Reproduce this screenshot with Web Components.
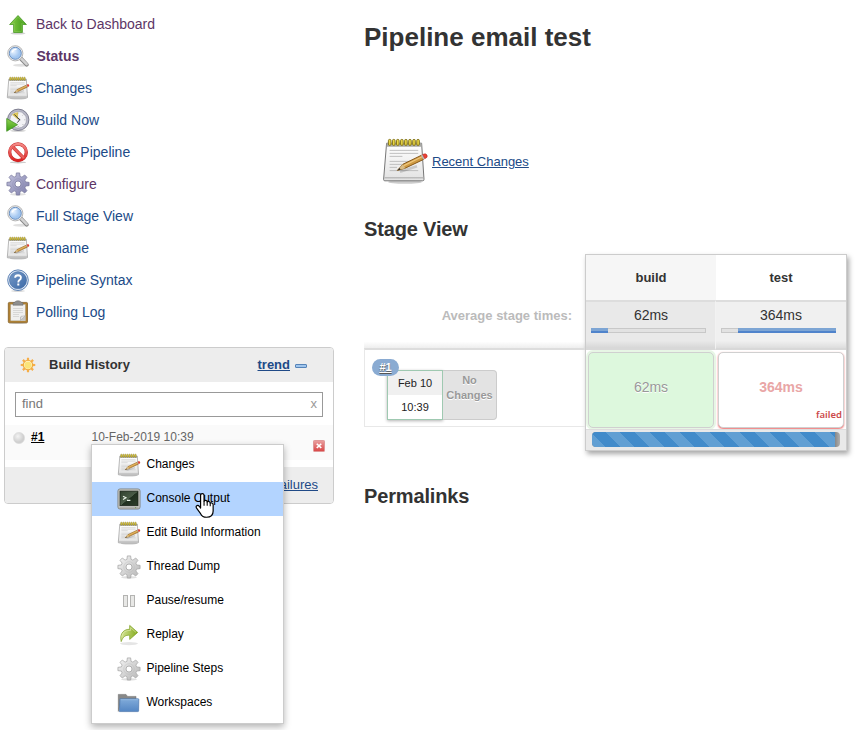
<!DOCTYPE html>
<html lang="en">
<head>
<meta charset="utf-8">
<title>Pipeline email test</title>
<style>
html, body { margin: 0; background: #fff; }
body { width: 860px; height: 730px; overflow: hidden; font-family: "Liberation Sans", Arial, sans-serif; color: #333; }
</style>
</head>
<body>
<job-page></job-page>
<script>
function gearPath(c, teeth, ro, ri) {
  const pts = [], step = Math.PI * 2 / teeth;
  for (let i = 0; i < teeth; i++) {
    const a = i * step - Math.PI / 2;
    for (const [d, r] of [[-.31, ri], [-.17, ro], [.17, ro], [.31, ri]])
      pts.push((c + r * Math.cos(a + d * step * 1.1)).toFixed(2) + ' ' + (c + r * Math.sin(a + d * step * 1.1)).toFixed(2));
  }
  return 'M' + pts.join('L') + 'Z';
}
const gear = (light, dark, stroke) => `
  <defs><linearGradient id="g" x1="0" y1="0" x2="1" y2="1"><stop offset="0" stop-color="${light}"/><stop offset="1" stop-color="${dark}"/></linearGradient></defs>
  <ellipse cx="12" cy="22.3" rx="8" ry="1.3" fill="#000" opacity=".12"/>
  <path d="${gearPath(12, 8, 11.2, 7.9)}" fill="url(#g)" stroke="${stroke}" stroke-width=".7" stroke-linejoin="round"/>
  <circle cx="12" cy="12" r="5.3" fill="none" stroke="${stroke}" stroke-width=".6" opacity=".35"/>
  <circle cx="12" cy="12" r="3" fill="#fff" stroke="${stroke}" stroke-width=".8"/>`;
const coil = n => Array.from({ length: n }, (_, i) => `<rect x="${3.7 + i * 16.2 / n}" y="1.2" width="1.3" height="3" rx=".6" fill="#e8d544" stroke="#7d6d10" stroke-width=".45"/>`).join('');
const ICONS = {
  up: `<defs><linearGradient id="g" x1="0" x2="1"><stop offset="0" stop-color="#86cc45"/><stop offset="1" stop-color="#3d9a16"/></linearGradient></defs>
    <ellipse cx="12" cy="21.3" rx="7.5" ry="1.2" fill="#000" opacity=".18"/>
    <path d="M12 3.5 20.4 12.5H16.4V20.5H7.6V12.5H3.6Z" fill="url(#g)" stroke="#4c9a28" stroke-width=".8" stroke-linejoin="round"/>
    <path d="M12 5 18 11.6H15.4V19.5H8.6V11.6H6Z" fill="none" stroke="#b1e182" stroke-width=".4" opacity=".6"/>`,
  search: `<defs><radialGradient id="g" cx=".35" cy=".35"><stop offset="0" stop-color="#eaf4ff"/><stop offset="1" stop-color="#a2c6f0"/></radialGradient></defs>
    <ellipse cx="15" cy="21.3" rx="8" ry="1.5" fill="#000" opacity=".12"/>
    <path d="M14.8 14.5 20.7 20.6" stroke="#888" stroke-width="4" stroke-linecap="round"/><path d="M15 14.4 20.6 20.2" stroke="#d2d2d2" stroke-width="2.6" stroke-linecap="round"/>
    <circle cx="9.3" cy="9.3" r="7.6" fill="#eee" stroke="#999" stroke-width=".7"/>
    <circle cx="9.3" cy="9.3" r="6" fill="url(#g)" stroke="#6289bb" stroke-width=".9"/>
    <path d="M5.8 8.5Q7 5.3 10.6 5.1" stroke="#fff" fill="none" stroke-width="1.2"/>`,
  notepad: `<defs><linearGradient id="g" x1="0" y1="0" x2="0" y2="1"><stop offset="0" stop-color="#fff"/><stop offset="1" stop-color="#e2e2e2"/></linearGradient></defs>
    <ellipse cx="12" cy="22.5" rx="8.5" ry=".9" fill="#000" opacity=".2"/>
    <path d="M2.8 3.1H20.3L21.5 21.2Q21.5 21.9 20.9 21.9H1.9Q1.3 21.9 1.3 21.2Z" fill="url(#g)" stroke="#777" stroke-width=".5"/>
    <path d="M2.8 3.1H20.3V4.9H2.8Z" fill="#a9a9a5"/><path d="M1.7 20.4H21.1" stroke="#bbb" stroke-width=".8"/>
    ${coil(8)}
    <path d="M4.3 6.7H18.6M4.3 8.2H18.6M4.3 9.7H10.7M4.3 12.2H18.6M4.3 13.7H12M4.3 15.2H8M4.3 16.8H18.6" stroke="#b3b3b3" stroke-width=".4"/>
    <path d="M9.5 17.4 18 14.6" stroke="#000" opacity=".15" stroke-width="1.3"/>
    <path d="M8.2 16.7 11 13.6 20.3 9.1 21.3 11.2 12.1 15.6Z" fill="#cf9a42" stroke="#87591c" stroke-width=".5" stroke-linejoin="round"/>
    <path d="M11 13.6 12.1 15.6 8.2 16.7Z" fill="#d9bd87"/><path d="M8.2 16.7 9.3 15.5 9.8 16.3Z" fill="#222"/><path d="M11.4 14.3 20.5 9.9" stroke="#efc77c" stroke-width=".6"/>
    <path d="M20 9.2 21.1 11.3 22 10.8 20.9 8.7Z" fill="#bbb"/><path d="M20.8 8.7 21.9 10.9Q23.6 10.2 23 9Q22.4 7.9 20.8 8.7Z" fill="#ee4034" stroke="#a52b22" stroke-width=".25"/>`,
  clock: `<defs><linearGradient id="g" x1="0" y1="0" x2="0" y2="1"><stop offset="0" stop-color="#92d055"/><stop offset="1" stop-color="#3aa112"/></linearGradient></defs>
    <ellipse cx="12" cy="22.8" rx="8" ry=".9" fill="#000" opacity=".2"/>
    <circle cx="12.2" cy="11.8" r="10.7" fill="#b9b9c8" stroke="#6a6a7c" stroke-width=".8"/><circle cx="12.2" cy="11.8" r="8.3" fill="#f2f2f6" stroke="#888899" stroke-width=".5"/>
    <path d="M12.2 11.8 6 6.7A8 8 0 0 1 12 4.2Z" fill="#dcc65a"/>
    <path d="M8.3 6.4 13.6 11.8 11.4 14.6M11.9 10.2 14.2 11.8" fill="none" stroke="#333" stroke-width=".9"/><path d="M12.2 4.5V5.5M19.4 11.8H18.4M12.2 19V18M17.3 6.7 16.6 7.4M17.3 16.9 16.6 16.2" stroke="#777" stroke-width=".6"/>
    <path d="M.7 10.5 11.5 16.7.7 23.3Z" fill="url(#g)" stroke="#39891b" stroke-width=".7"/>`,
  no: `<defs><linearGradient id="g" x1="0" y1="0" x2="0" y2="1"><stop offset="0" stop-color="#f58a86"/><stop offset="1" stop-color="#d92424"/></linearGradient></defs>
    <ellipse cx="12" cy="22.4" rx="8" ry="1" fill="#000" opacity=".2"/>
    <circle cx="12" cy="12.3" r="8.3" fill="#fff" stroke="#c42a2a" stroke-width="3.3"/><path d="M6.2 6.4 17.8 18.2" stroke="#c42a2a" stroke-width="3.4"/>
    <circle cx="12" cy="12.3" r="8.3" fill="none" stroke="url(#g)" stroke-width="2.4"/><path d="M6.1 6.4 17.9 18.2" stroke="#ea5f5b" stroke-width="2.4"/>`,
  gear: gear('#c4c4df', '#7c7ca8', '#75759a'),
  graygear: gear('#f6f6f6', '#b4b4b4', '#a2a2a2'),
  help: `<defs><linearGradient id="g" x1="0" y1="0" x2="1" y2="1"><stop offset="0" stop-color="#7599c6"/><stop offset="1" stop-color="#3b69a8"/></linearGradient></defs>
    <ellipse cx="12" cy="23" rx="7" ry=".8" fill="#000" opacity=".2"/>
    <circle cx="12" cy="12.2" r="10.3" fill="#e4edf8" stroke="#4a73ab" stroke-width=".9"/><circle cx="12" cy="12.2" r="8.6" fill="url(#g)" stroke="#3c659d" stroke-width=".5"/>
    <path d="M9.1 9.8Q9.2 7.3 12.1 7.3Q15 7.4 14.9 9.7Q14.8 11.3 13.2 12.3Q12.3 13 12.3 14.5" fill="none" stroke="#fff" stroke-width="1.9"/><rect x="11.3" y="15.5" width="2" height="2" fill="#fff"/>`,
  clipboard: `<ellipse cx="12" cy="23.3" rx="9" ry=".7" fill="#000" opacity=".18"/>
    <rect x="2.3" y="2.4" width="19.2" height="20.4" rx="1" fill="#b08030" stroke="#7a551a" stroke-width=".7"/><rect x="4.5" y="4.2" width="15" height="16.7" fill="#f0f0ef" stroke="#9b8b69" stroke-width=".4"/>
    <path d="M7 8.5H17M7 10.5H17M7 12.5H17M7 14.5H13M7 16.5H13" stroke="#cdcdcd" stroke-width=".7"/>
    <path d="M14 20.7V17L19.4 15.5V20.7Z" fill="#c4c4c4"/><path d="M14.4 20.5 15 16.3 19.3 15.8Z" fill="#e5e5e5" stroke="#999" stroke-width=".4"/>
    <path d="M7 3.3Q7 2.3 9 2.2Q9.2.7 12 .7T15 2.2Q17 2.3 17 3.3V5.2H7Z" fill="#8e8e8e" stroke="#656565" stroke-width=".5"/>`,
  terminal: `<defs><linearGradient id="g" x1="0" y1="0" x2="1" y2="1"><stop offset="0" stop-color="#30402e"/><stop offset=".5" stop-color="#4a5c47"/><stop offset=".52" stop-color="#20301f"/><stop offset="1" stop-color="#2c3d2a"/></linearGradient></defs>
    <rect x=".9" y="1.9" width="22.2" height="20.2" rx="2.2" fill="#c5c6c0" stroke="#7c7d78" stroke-width=".8"/><path d="M2.5 21H21.5" stroke="#92938d" stroke-width=".8"/>
    <rect x="3" y="4.1" width="18" height="14.6" fill="url(#g)" stroke="#182116" stroke-width=".7"/>
    <path d="M6 9.2 9 10.8 6 12.4M10 13.4H13.4" fill="none" stroke="#eaf2e7" stroke-width="1.1"/><circle cx="18.6" cy="20.6" r=".6" fill="#6e9e57"/>`,
  pause: `<g fill="#e8e8e6" stroke="#b4b4b2"><rect x="6.5" y="6.5" width="4" height="11"/><rect x="13.5" y="6.5" width="4" height="11"/></g>`,
  replay: `<defs><linearGradient id="g" x1="0" y1="0" x2="1" y2="0"><stop offset="0" stop-color="#d4e394"/><stop offset="1" stop-color="#83ab1d"/></linearGradient></defs>
    <ellipse cx="12" cy="20.6" rx="9" ry="1.6" fill="#000" opacity=".1"/>
    <path d="M4.2 18.6C2.2 9.9 7.5 6.1 12.7 6.3V2.4L20.7 9.4 12.7 16.4V12.2C8.6 12 6 13.4 4.2 18.6Z" fill="url(#g)" stroke="#87a62f" stroke-width=".8" stroke-linejoin="round"/><path d="M4.7 14.4C5.2 8.9 9 7.4 13.6 7.4V4.6L19 9.4" fill="none" stroke="#e6efb9" stroke-width=".6"/>`,
  folder: `<defs><linearGradient id="g" x1="0" y1="0" x2="0" y2="1"><stop offset="0" stop-color="#80abda"/><stop offset="1" stop-color="#5486c3"/></linearGradient></defs>
    <path d="M1.3 20.4V3.4H9L10.5 5.4H19V10H4Z" fill="#888" stroke="#666" stroke-width=".5"/>
    <path d="M3 7.8H21.2Q21.8 7.8 21.8 8.4L21.6 19.9Q21.5 20.6 20.8 20.6H2.4Z" fill="url(#g)" stroke="#4a76ac" stroke-width=".7"/><path d="M3.6 8.7H21" stroke="#a5c6ea" stroke-width=".6"/>`,
  sun: `<path d="${gearPath(12, 8, 11, 6.6)}" fill="#f7ae48"/><circle cx="12" cy="12" r="7" fill="#fff2be" stroke="#efab42" stroke-width="1.6"/><circle cx="12" cy="12.5" r="5.2" fill="#fbe47a"/>`,
  ball: `<defs><radialGradient id="g" cx=".4" cy=".35"><stop offset="0" stop-color="#f3f3f3"/><stop offset="1" stop-color="#cfcfcf"/></radialGradient></defs><circle cx="12" cy="12" r="11.3" fill="url(#g)" stroke="#ddd"/>`,
  stop: `<defs><linearGradient id="g" x1="0" y1="0" x2="0" y2="1"><stop offset="0" stop-color="#eaa0a0"/><stop offset="1" stop-color="#d94444"/></linearGradient></defs><rect x="1" y="1" width="22" height="22" rx="1.5" fill="url(#g)" stroke="#df9898" stroke-width="2"/><path d="M7.5 7.5 16.5 16M16.5 7.5 7.5 16" stroke="#fff" stroke-width="3.4"/>`,
  hand: `<path d="M7 14.8V3.2Q7 1.5 8.6 1.5T10.2 3.2V8.7Q10.6 7.6 11.8 7.8Q13.1 8 13.1 9.4Q13.6 8.5 14.7 8.8Q15.9 9.1 15.9 10.4Q16.6 9.8 17.5 10.2Q18.6 10.6 18.6 12V17.5Q18.6 23.3 12.5 23.3Q8.6 23.3 7 20L3.3 14.9Q2.3 13.3 3.6 12.6Q4.9 12 6 13.4Z" fill="#fff" stroke="#000" stroke-width="1.1" stroke-linejoin="round"/><path d="M10.2 8.7V12.6M13.1 9.4V12.8M15.9 10.4V13.2" stroke="#000" stroke-width="1"/>`
};

class JobElement extends HTMLElement {
  connectedCallback() {
    if (this.shadowRoot) return;
    const t = document.createElement('template');
    t.innerHTML = this.render();
    this.attachShadow({ mode: 'open' }).append(t.content.cloneNode(true));
  }
}
customElements.define('job-icon', class extends JobElement {
  render() {
    const s = this.getAttribute('size') || 24;
    return `<style>:host{display:block;flex:none;width:${s}px;height:${s}px}svg{display:block}</style><svg width="${s}" height="${s}" viewBox="0 0 24 24">${ICONS[this.getAttribute('name')]}</svg>`;
  }
});
customElements.define('task-link', class extends JobElement {
  render() {
    return `<style>:host{display:flex;align-items:center;height:32px;font-size:14px;color:#204a87}
      :host([visited]){color:#5c3566}:host([current]){font-weight:bold}
      a{margin-left:6px;white-space:nowrap}:host([current]) a{margin-left:6.5px}</style><job-icon name="${this.getAttribute('icon')}"></job-icon><a><slot></slot></a>`;
  }
});
customElements.define('menu-item', class extends JobElement {
  render() {
    return `<style>:host{display:flex;align-items:center;height:34px;padding-left:25px;font-size:12px;color:#000}
      :host([active]){background:#b3d4ff}span{margin:-2px 0 0 5.5px;white-space:nowrap}</style><job-icon name="${this.getAttribute('icon')}"></job-icon><span><slot></slot></span>`;
  }
});
customElements.define('context-menu', class extends JobElement {
  render() {
    return `<style>:host{display:block;box-sizing:border-box;width:193px;height:280px;padding:3px 0;background:#fff;border:1px solid #ccc;box-shadow:0 3px 7px rgba(0,0,0,.3)}</style><slot></slot>`;
  }
});
customElements.define('build-history', class extends JobElement {
  render() {
    return `<style>
      :host{display:flex;flex-direction:column;box-sizing:border-box;width:330px;height:157px;border:1px solid #ccc;border-radius:4px;overflow:hidden;font-size:13px}
      header{display:flex;align-items:center;height:34px;background:#ededed;font-weight:bold;padding-left:15px;color:#333}
      header b{margin-left:13px;flex:1}
      header a,footer a{text-decoration:underline;color:#204a87}
      i{box-sizing:border-box;width:12px;height:4px;border:1px solid #5583b8;background:#a0c5ec;border-radius:1px;margin:3px 26px 0 5px}
      .find{box-sizing:border-box;display:flex;justify-content:space-between;align-items:center;height:25px;margin:10px 10px 8px;padding:0 5px 1px 6px;border:1px solid #999;color:#777}
      .find span:last-child{color:#999;font-size:13px}
      .build{display:flex;height:36px;background:#fafafa;padding-left:8px}
      .build job-icon{margin-top:7px}.build a{width:60.5px;margin:5px 0 0 6px;font-weight:bold;text-decoration:underline;color:#000;font-size:12px}
      .build time{font-size:12px;margin-top:5px;color:#666;width:221.5px}.build .stop{margin-top:15px}
      footer{box-sizing:border-box;height:36px;margin-top:7px;background:#ededed;text-align:right;padding:10px 15px 0 0;white-space:nowrap;font-size:13px}
      </style>
      <header><job-icon name="sun" size="16"></job-icon><b>Build History</b><a>trend</a><i></i></header>
      <div class="find"><span>find</span><span>x</span></div>
      <div class="build"><job-icon name="ball" size="12"></job-icon><a>#1</a><time>10-Feb-2019 10:39</time><job-icon class="stop" name="stop" size="12"></job-icon></div>
      <footer><a>failures</a></footer>`;
  }
});
customElements.define('stage-average', class extends JobElement {
  render() {
    return `<style>:host{display:block;box-sizing:border-box;padding:5px 0 0 5px;border-top:2px solid #ddd;border-bottom:2px solid #d8d8d8;font-size:14px;color:#333;background:linear-gradient(transparent 84%,rgba(0,0,0,.08))}
      section{width:120px;text-align:center}
      div{box-sizing:border-box;width:115px;height:5px;margin-top:5px;background:#e2e2e2;border:1px solid #c8c8c8;display:flex}
      i{height:5px;margin:-1px;flex:none;width:${this.getAttribute('share')};margin-left:${this.getAttribute('from')};background:linear-gradient(#7da5d4 55%,#4f83cb 60%)}</style>
      <section><slot></slot></section><div><i></i></div>`;
  }
});
customElements.define('run-label', class extends JobElement {
  render() {
    return `<style>:host{display:block;position:relative;box-sizing:border-box;padding:20px 0 0 22px;border:1px solid #e8e8e8;border-top:2px solid #ddd;border-right:0;font-size:11px;text-align:center}
      .cards{display:flex}.date{box-sizing:border-box;width:56px;height:50px;border:1px solid #9fc9b1;background:#fff;box-shadow:0 1px 3px rgba(0,0,0,.3);line-height:24px;color:#222}
      .date div:first-child{background:#f0f0f0}.none{box-sizing:border-box;width:54px;height:50px;border:1px solid #ccc;border-left:0;border-radius:0 4px 4px 0;background:#e3e3e3;color:#999;font-weight:bold;line-height:15px;padding-top:2px;text-shadow:0 1px #fff}
      .badge{position:absolute;left:7px;top:9px;width:27px;height:17px;line-height:17px;border-radius:9px;background:#8aabd2;color:#fff;font-weight:bold;text-decoration:underline;text-shadow:0 1px 1px #555}</style>
      <div class="cards"><div class="date"><div>Feb 10</div><div>10:39</div></div><div class="none">No<br>Changes</div></div><span class="badge">#1</span>`;
  }
});
customElements.define('stage-table', class extends JobElement {
  render() {
    return `<style>
      :host{display:grid;grid-template-columns:221px 262px;height:197px}
      .left{display:grid;grid-template-rows:94px 79px;align-content:start}
      .avg{display:flex;flex-direction:column;justify-content:flex-end;align-items:flex-end;box-sizing:border-box;padding:0 13px 25px 0;color:#bbb;font-size:13px;font-weight:bold;background:linear-gradient(transparent 93%,#eee)}
      .right{box-sizing:border-box;height:197px;border:1px solid #ccc;background:#fff;box-shadow:2px 3px 5px rgba(0,0,0,.35);display:grid;grid-template-columns:130px 130px;grid-template-rows:45px 50px 79px 21px}
      h3{margin:0;font-size:13px;line-height:45px;text-align:center;color:#333}
      .odd{background-color:#f6f6f6}.grey{background-color:#e9e9e9;border-right:1px solid #f2f2f2}.pale{background-color:#f0f0f0}
      .cell{position:relative;box-sizing:border-box;margin:2px 2px 1px 2px;border:1px solid #d0d0d0;border-radius:5px;text-align:center;line-height:69px;font-size:14px;color:#999;text-shadow:0 1px #fff}
      .ok{background:#ddf8dd;box-shadow:0 0 0 2px #e7f6e5}.bad{background:#fff;color:#e9a6a6;font-weight:bold;box-shadow:0 1px 2px #e66}
      .bad small{position:absolute;right:1px;bottom:6px;line-height:12px;font-size:9.5px;font-weight:600;font-family:"Noto Sans","Open Sans",sans-serif;color:#cc4b4b;text-shadow:none}
      .bar{grid-column:1/3;background:#e9e9e9;border-top:1px solid #ddd;padding:2px 6px 3px;position:relative}
      .track{height:15px;background:linear-gradient(90deg,#888 243px,#b0b0b0);border-radius:4px;overflow:hidden}
      .track div{height:15px;width:243px;background:repeating-linear-gradient(45deg,#619fd3 0 9.2px,#428bca 9.2px 19.8px,#619fd3 19.8px 21.2px)}
      </style>
      <div class="left"><div class="avg">Average stage times:</div><run-label></run-label></div>
      <div class="right"><h3 class="odd">build</h3><h3>test</h3>
      <stage-average class="grey" share="17px" from="-1px">62ms</stage-average><stage-average class="pale" share="98px" from="16px">364ms</stage-average>
      <div class="cell ok">62ms</div><div class="cell bad">364ms<small>failed</small></div>
      <div class="bar"><div class="track"><div></div></div></div></div>`;
  }
});
customElements.define('job-page', class extends JobElement {
  render() {
    return `<style>
      :host{display:grid;grid-template-columns:364px 496px;width:860px;height:730px;position:relative;overflow:hidden}
      nav{padding:8px 0 19px 6px}build-history{margin-left:4px}
      h1{font-size:26px;line-height:30px;margin:22px 0 0}h2{font-size:20px;line-height:24px;margin:0;letter-spacing:-.15px}
      .recent{display:flex;align-items:center;height:48px;margin:85px 0 32px 17px;font-size:13px;color:#204a87}.recent a{margin-left:3px;text-decoration:underline}
      stage-table{margin:13px 0 33px}
      context-menu{position:absolute;left:91px;top:444px}.hand{position:absolute;left:193px;top:492px}
      </style>
      <aside><nav>
      <task-link icon="up" visited>Back to Dashboard</task-link><task-link icon="search" visited current>Status</task-link>
      <task-link icon="notepad">Changes</task-link><task-link icon="clock">Build Now</task-link><task-link icon="no">Delete Pipeline</task-link>
      <task-link icon="gear" visited>Configure</task-link><task-link icon="search">Full Stage View</task-link><task-link icon="notepad">Rename</task-link>
      <task-link icon="help">Pipeline Syntax</task-link><task-link icon="clipboard">Polling Log</task-link></nav>
      <build-history></build-history></aside>
      <main><h1>Pipeline email test</h1>
      <div class="recent"><job-icon name="notepad" size="48"></job-icon><a>Recent Changes</a></div>
      <h2>Stage View</h2><stage-table></stage-table><h2>Permalinks</h2></main>
      <context-menu><menu-item icon="notepad">Changes</menu-item><menu-item icon="terminal" active>Console Output</menu-item><menu-item icon="notepad">Edit Build Information</menu-item><menu-item icon="graygear">Thread Dump</menu-item><menu-item icon="pause">Pause/resume</menu-item><menu-item icon="replay">Replay</menu-item><menu-item icon="graygear">Pipeline Steps</menu-item><menu-item icon="folder">Workspaces</menu-item></context-menu>
      <job-icon class="hand" name="hand" size="26"></job-icon>`;
  }
});
</script>
</body>
</html>
